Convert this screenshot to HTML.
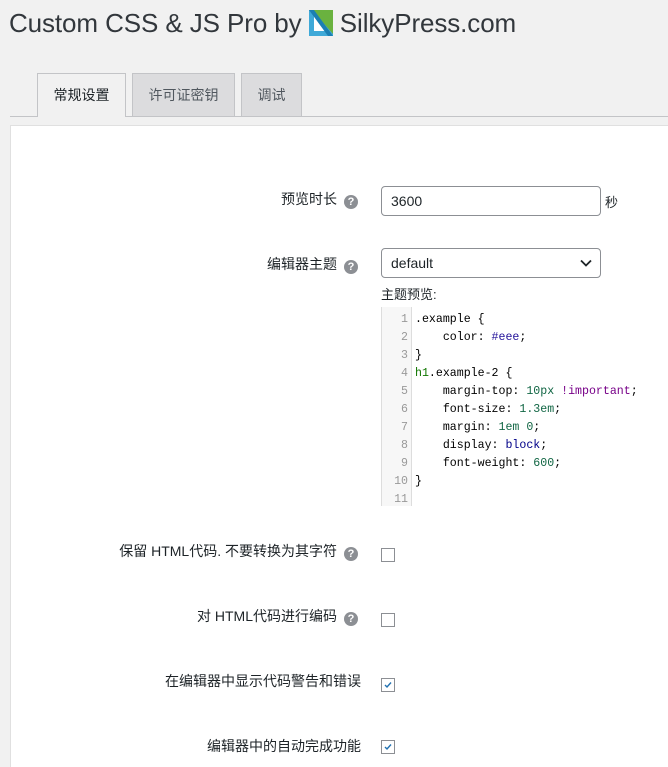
<!DOCTYPE html>
<html><head><meta charset="utf-8"><style>
body{margin:0;background:#f1f1f1;font-family:"Liberation Sans","Noto Sans CJK SC",sans-serif;color:#1d2327;width:668px;height:767px;overflow:hidden;position:relative}
.abs{position:absolute}
h1{position:absolute;left:9px;top:8px;margin:0;font-weight:300;font-size:26px;color:#32373c;white-space:nowrap;letter-spacing:-0.1px}
.tab{position:absolute;top:73px;height:42px;border:1px solid #c3c4c7;border-bottom:none;background:#dcdcde;font-size:14px;line-height:42px;text-align:center;color:#50575e}
.line{position:absolute;left:10px;right:0;top:116px;border-top:1px solid #c3c4c7}
.panel{position:absolute;left:10px;top:125px;right:0;bottom:0;background:#fff;border:1px solid #e0e0e0;border-right:none;border-bottom:none}
.lbl{position:absolute;right:310px;font-size:14px;color:#1d2327;white-space:nowrap}
.q{display:inline-block;width:14px;height:14px;border-radius:50%;background:#8c8f94;color:#fff;font-size:11px;line-height:14px;text-align:center;font-weight:bold;margin-left:7px;vertical-align:-1px}
.inp{position:absolute;left:381px;width:209px;height:28px;border:1px solid #8c8f94;border-radius:4px;background:#fff;font-size:14px;line-height:28px;padding-left:9px;box-sizing:content-box}
.cb{position:absolute;left:381px;width:12px;height:12px;border:1px solid #8c8f94;background:#fff}
.cb svg{position:absolute;left:1px;top:1px}
.code{position:absolute;left:381px;top:307px;width:287px;height:199px;background:#fff;font-family:"Liberation Mono",monospace;font-size:11.6px}
.gut{position:absolute;left:0;top:0;width:29px;height:199px;background:#f7f7f7;border-right:1px solid #ddd;border-left:1px solid #ddd}
.ln{position:absolute;left:0;width:27px;text-align:right;color:#999}
.cl{position:absolute;left:34px;white-space:pre;color:#000}
.n{color:#164}.k{color:#708}.a{color:#221199}.v{color:#008}.t{color:#170}
</style></head><body>
<h1>Custom CSS &amp; JS Pro by <svg width="24" height="26" viewBox="0 0 24 26" style="vertical-align:-4px"><rect x="0" y="0" width="24" height="26" fill="#3fa9d8"/><polygon points="3,0 24,0 24,24" fill="#6ab23f"/><polygon points="5,6 16,21 5,21" fill="#fff"/><polygon points="0,0 5,0 24,26 19,26" fill="#1c7fb3"/></svg> SilkyPress.com</h1>
<div class="line"></div>
<div class="tab" style="left:37px;width:87px;background:#f1f1f1;color:#1d2327;height:43px">常规设置</div>
<div class="tab" style="left:132px;width:101px">许可证密钥</div>
<div class="tab" style="left:241px;width:59px">调试</div>
<div class="panel"></div>
<div class="lbl" style="top:189px">预览时长<span class="q">?</span></div>
<div class="inp" style="top:186px">3600</div>
<div class="abs" style="left:605px;top:192px;font-size:13px">秒</div>
<div class="lbl" style="top:254px">编辑器主题<span class="q">?</span></div>
<div class="inp" style="top:248px">default<svg class="abs" style="right:8px;top:10px" width="12" height="8" viewBox="0 0 12 8"><path d="M1 1.5 6 6.5 11 1.5" stroke="#1d2327" stroke-width="1.8" fill="none"/></svg></div>
<div class="abs" style="left:381px;top:284px;font-size:13px">主题预览:</div>
<div class="code"><div class="gut"></div>
<div class="ln" style="top:6px">1</div><div class="cl" style="top:6px">.example {</div>
<div class="ln" style="top:24px">2</div><div class="cl" style="top:24px">    color: <span class="a">#eee</span>;</div>
<div class="ln" style="top:42px">3</div><div class="cl" style="top:42px">}</div>
<div class="ln" style="top:60px">4</div><div class="cl" style="top:60px"><span class="t">h1</span>.example-2 {</div>
<div class="ln" style="top:78px">5</div><div class="cl" style="top:78px">    margin-top: <span class="n">10px</span> <span class="k">!important</span>;</div>
<div class="ln" style="top:96px">6</div><div class="cl" style="top:96px">    font-size: <span class="n">1.3em</span>;</div>
<div class="ln" style="top:114px">7</div><div class="cl" style="top:114px">    margin: <span class="n">1em 0</span>;</div>
<div class="ln" style="top:132px">8</div><div class="cl" style="top:132px">    display: <span class="v">block</span>;</div>
<div class="ln" style="top:150px">9</div><div class="cl" style="top:150px">    font-weight: <span class="n">600</span>;</div>
<div class="ln" style="top:168px">10</div><div class="cl" style="top:168px">}</div>
<div class="ln" style="top:186px">11</div>
</div>
<div class="lbl" style="top:541px">保留 HTML代码. 不要转换为其字符<span class="q">?</span></div>
<div class="cb" style="top:548px"></div>
<div class="lbl" style="top:606px">对 HTML代码进行编码<span class="q">?</span></div>
<div class="cb" style="top:613px"></div>
<div class="lbl" style="top:671px;right:307px">在编辑器中显示代码警告和错误</div>
<div class="cb" style="top:678px"><svg width="10" height="10" viewBox="0 0 10 10"><path d="M2 5 4 7 8 2.5" stroke="#2271b1" stroke-width="1.4" fill="none"/></svg></div>
<div class="lbl" style="top:736px;right:307px">编辑器中的自动完成功能</div>
<div class="cb" style="top:740px"><svg width="10" height="10" viewBox="0 0 10 10"><path d="M2 5 4 7 8 2.5" stroke="#2271b1" stroke-width="1.4" fill="none"/></svg></div>
</body></html>
